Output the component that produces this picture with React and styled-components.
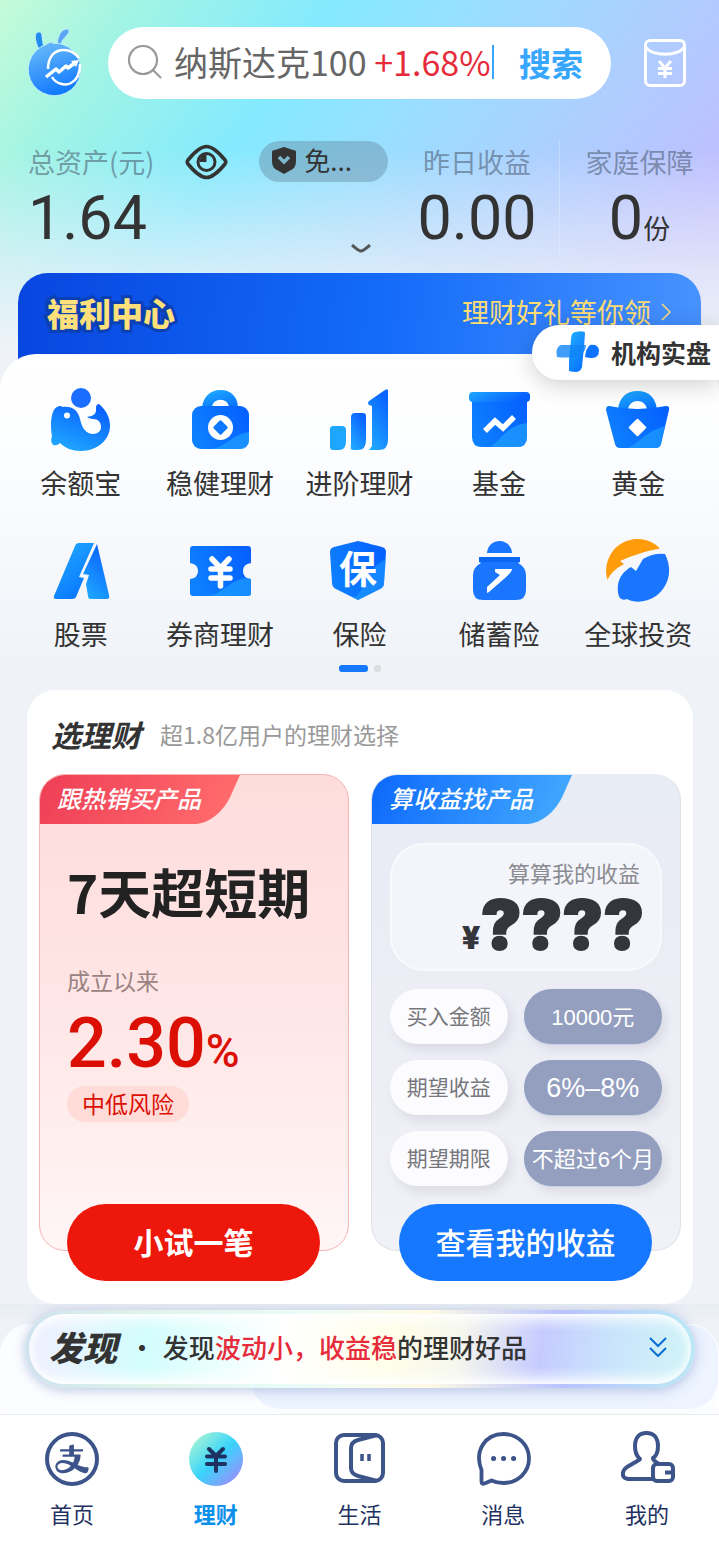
import React from "react";
import styled, { createGlobalStyle, css } from "styled-components";
import { AiOutlineAlipay } from "react-icons/ai";

const GlobalStyle = createGlobalStyle`
  * {
    box-sizing: border-box;
  }
  body {
    margin: 0;
    background: #eff3f8;
    color: #333;
    font-family: "Noto Sans CJK SC", sans-serif;
  }
  h1, h2, h3, p, dl, dt, dd, ul {
    margin: 0;
    padding: 0;
  }
  button {
    border: 0;
    padding: 0;
    background: none;
    color: inherit;
    font-family: inherit;
    cursor: pointer;
  }
  a {
    color: inherit;
    text-decoration: none;
  }
  svg {
    display: block;
    flex: none;
  }
`

const Top = styled.header`
  background:
    linear-gradient(to bottom, rgba(239, 243, 248, 0) 150px, rgba(236, 241, 248, 0.72) 270px, #eff3f8 350px),
    linear-gradient(125deg, #c5fbd8 0%, #a2f4e4 14%, #84eafe 34%, #9adeff 50%, #abd0ff 66%, #bfbfff 86%, #c8c0fa 100%);
`

const SearchRow = styled.div`
  display: flex;
  align-items: center;
  padding: 27px 33px 0 28px;
`

const SearchBox = styled.form`
  flex: 1;
  min-width: 0;
  height: 72px;
  margin: 0 33px 0 26px;
  padding: 0 28px 2px 20px;
  display: flex;
  align-items: center;
  border-radius: 36px;
  background: #fff;
`

const SearchField = styled.label`
  flex: 1;
  min-width: 0;
  position: relative;
  display: flex;
  align-items: center;
  gap: 12px;
`

const SearchInput = styled.input`
  position: absolute;
  inset: 0 0 0 46px;
  border: 0;
  outline: 0;
  background: transparent;
  font-size: 34px;
`

const SearchHint = styled.span`
  font-size: 34px;
  line-height: 48px;
  color: #666;
  white-space: nowrap;
  em {
    font-style: normal;
    color: #e62c3b;
  }
`

const SearchButton = styled.button`
  padding-left: 27px;
  display: flex;
  align-items: center;
  position: relative;
  font-size: 32px;
  line-height: 48px;
  font-weight: 700;
  color: #36a6ff;
  &::before {
    content: "";
    position: absolute;
    left: 0;
    width: 2px;
    height: 34px;
    background: #36a6ff;
  }
`

const Assets = styled.section`
  display: grid;
  grid-template-columns: 1fr 164px 160px;
  padding: 42px 0 19px 28px;
`

const AssetBlock = styled.div`
  position: relative;
  ${props => props.$divided && css`
    border-left: 1px solid rgba(255, 255, 255, 0.25);
  `}
`

const AssetLabel = styled.div`
  height: 41px;
  display: flex;
  align-items: center;
  justify-content: ${props => props.$center ? "center" : "flex-start"};
  gap: 31px;
  font-size: 27px;
  line-height: 38px;
  color: rgba(70, 85, 105, 0.55);
  white-space: nowrap;
`

const AssetValue = styled.div`
  height: 72px;
  display: flex;
  align-items: baseline;
  justify-content: ${props => props.$center ? "center" : "flex-start"};
  font-family: Roboto, "Noto Sans CJK SC", sans-serif;
  font-size: 61px;
  line-height: 72px;
  small {
    font-size: 27px;
  }
`

const Guard = styled.button`
  width: 129px;
  height: 41px;
  padding: 0 0 3px 12px;
  display: flex;
  align-items: center;
  gap: 7px;
  border-radius: 21px;
  background: rgba(102, 140, 165, 0.45);
  font-size: 26px;
  line-height: 38px;
  color: #333;
`

const Expand = styled.button`
  position: absolute;
  right: 24px;
  bottom: 0;
`

const BannerWrap = styled.div`
  position: relative;
  padding: 0 18px;
`

const Banner = styled.a`
  height: 101px;
  margin-bottom: -20px;
  padding: 0 30px 24px 29px;
  display: flex;
  align-items: center;
  justify-content: space-between;
  border-radius: 30px 30px 0 0;
  background: linear-gradient(95deg, #0846df, #136af9 52%, #4893ff);
  color: #ffdc73;
`

const BannerTitle = styled.strong`
  font-size: 32px;
  line-height: 48px;
  font-weight: 900;
  color: #ffe07a;
  -webkit-text-stroke: 6px #0b3fb4;
  paint-order: stroke fill;
`

const BannerLink = styled.span`
  display: flex;
  align-items: center;
  gap: 10px;
  font-size: 27px;
  line-height: 40px;
`

const FloatTag = styled.a`
  position: absolute;
  z-index: 2;
  top: 52px;
  right: 0;
  height: 55px;
  padding: 0 8px 2px 24px;
  display: flex;
  align-items: center;
  gap: 12px;
  border-radius: 28px 0 0 28px;
  background: #fff;
  box-shadow: 0 4px 24px rgba(0, 0, 0, 0.2);
  font-size: 25px;
  line-height: 36px;
  font-weight: 700;
`

const Sheet = styled.nav`
  position: relative;
  padding: 34px 11px 18px;
  border-radius: 36px 36px 0 0;
  background: linear-gradient(#fff, #fdfeff 25%, #f5f7fb 65%, #eff3f8 95%);
`

const Features = styled.ul`
  display: grid;
  grid-template-columns: repeat(5, 1fr);
  row-gap: 36px;
  list-style: none;
`

const Feature = styled.a`
  display: flex;
  flex-direction: column;
  align-items: center;
  gap: 11px;
  font-size: 27px;
  line-height: 40px;
  white-space: nowrap;
`

const Pager = styled.div`
  margin-top: 11px;
  display: flex;
  justify-content: center;
  gap: 6px;
`

const PagerDot = styled.span`
  width: ${props => props.$active ? "29px" : "7px"};
  height: 7px;
  border-radius: 3px;
  background: ${props => props.$active ? "#1677ff" : "#dcdcde"};
`

const Card = styled.section`
  margin: 0 26px 0 27px;
  padding: 0 12px 53px;
  border-radius: 28px;
  background: #fff;
`

const CardHead = styled.div`
  height: 84px;
  padding: 4px 0 0 12px;
  display: flex;
  align-items: center;
  gap: 19px;
`

const CardTitle = styled.h2`
  font-size: 30px;
  line-height: 44px;
  font-weight: 700;
  font-style: italic;
`

const CardNote = styled.p`
  font-size: 23px;
  line-height: 36px;
  color: #999;
`

const Panels = styled.div`
  display: grid;
  grid-template-columns: 1fr 1fr;
  gap: 22px;
`

const Panel = styled.article`
  display: flex;
  flex-direction: column;
  border-radius: 26px;
  border: 1px solid ${props => props.$hot ? "#f8b4b4" : "#dfe2e9"};
  border-top-color: ${props => props.$hot ? "#f8b4b4" : "#e8ecf5"};
  background: ${props => props.$hot
    ? "linear-gradient(#fedcdc, #ffe6e6 50%, #fff6f6)"
    : "linear-gradient(#e8ecf5, #ecedf5 45%, #f1f2f7)"};
`

const Tab = styled.h3`
  position: relative;
  z-index: 0;
  width: 200px;
  height: 49px;
  padding-left: 17px;
  overflow: hidden;
  border-top-left-radius: 25px;
  font-size: 24px;
  line-height: 46px;
  font-weight: 500;
  font-style: italic;
  color: #fff;
  &::before {
    content: "";
    position: absolute;
    z-index: -1;
    inset: 0 0 0 -40px;
    border-bottom-right-radius: 22px 28px;
    background: ${props => props.$hot
      ? "linear-gradient(90deg, #ee3d55 15%, #ff6a6c)"
      : "linear-gradient(90deg, #0b67fb 15%, #3fa6ff)"};
    transform: skewX(-24deg);
    transform-origin: top right;
  }
`

const Product = styled.div`
  padding: 37px 27px 0;
  display: flex;
  flex-direction: column;
  align-items: flex-start;
`

const ProductName = styled.strong`
  font-size: 53px;
  line-height: 60px;
  font-weight: 700;
  color: #222;
  white-space: nowrap;
`

const ProductLabel = styled.span`
  margin-top: 43px;
  font-size: 23px;
  line-height: 32px;
  color: #998282;
`

const Rate = styled.span`
  height: 72px;
  margin-top: 11px;
  font-family: Roboto, sans-serif;
  font-size: 70px;
  line-height: 72px;
  font-weight: 500;
  color: #dc0f05;
  small {
    font-size: 46px;
    line-height: 46px;
  }
`

const Risk = styled.span`
  margin-top: 7px;
  padding: 0 15px 2px;
  border-radius: 18px;
  background: #ffdcd8;
  font-size: 23px;
  line-height: 34px;
  color: #dc0f05;
`

const Cta = styled.button`
  height: 77px;
  margin: auto 28px -31px 27px;
  padding-bottom: 4px;
  border-radius: 39px;
  background: ${props => props.$hot ? "#ed180b" : "#1677ff"};
  font-size: 30px;
  line-height: 44px;
  font-weight: ${props => props.$hot ? 700 : 500};
  color: #fff;
`

const Guess = styled.div`
  height: 128px;
  margin: 19px 18px 0;
  padding: 11px 20px 0;
  border-radius: 34px;
  border: 2px solid #f8fafe;
  background: #f4f5fb;
  text-align: right;
`

const GuessLabel = styled.p`
  font-size: 22px;
  line-height: 32px;
  color: #8b8c92;
`

const GuessValue = styled.strong`
  display: block;
  margin-right: -4px;
  font-family: Inter, sans-serif;
  font-size: 68px;
  line-height: 72px;
  font-weight: 900;
  color: #35363c;
  -webkit-text-stroke: 2px #35363c;
  white-space: nowrap;
  small {
    font-size: 32px;
    line-height: 32px;
    -webkit-text-stroke: 0;
  }
`

const Terms = styled.dl`
  margin: 18px 18px;
  display: grid;
  grid-template-columns: 118fr 139fr;
  gap: 16px;
  text-align: center;
  white-space: nowrap;
`

const TermName = styled.dt`
  height: 55px;
  border-radius: 28px;
  background: #fcfcff;
  box-shadow: 4px 6px 10px rgba(80, 80, 110, 0.12);
  font-size: 21px;
  line-height: 53px;
  color: #77777c;
`

const TermValue = styled.dd`
  height: 55px;
  border-radius: 28px;
  background: #949fbf;
  box-shadow: 4px 6px 10px rgba(80, 80, 110, 0.12), 0 1px 0 #d5e4f5;
  font-family: "Liberation Sans", "Noto Sans CJK SC", sans-serif;
  font-size: ${props => props.$large ? "27px" : "22px"};
  line-height: 57px;
  color: #fff;
`

const Feed = styled.section`
  position: relative;
  height: 110px;
  padding: 6px 24px 0 25px;
  overflow: hidden;
  background: linear-gradient(#e8ecf3, #eff3f8 20px);
`

const FeedCard = styled.div`
  position: absolute;
  inset: ${props => props.$blue ? "20px 0 4px 250px" : "20px 0 -30px 0"};
  border-radius: 30px;
  border: 1px solid #fff;
  background: ${props => props.$blue ? "#edf3ff" : "#fcfdff"};
`

const Discover = styled.a`
  position: relative;
  height: 78px;
  padding: 0 24px 4px 20px;
  display: flex;
  align-items: center;
  border: 4px solid transparent;
  border-radius: 39px;
  background:
    linear-gradient(rgba(255, 255, 255, 0.6), rgba(255, 255, 255, 0) 25%, rgba(255, 255, 255, 0) 75%, rgba(255, 255, 255, 0.6)) padding-box,
    linear-gradient(97deg, #f2efff, #d2fdfd 18%, #fff 38%, #fefee9 55%, #f5f6ed 65%, #c5cbff 77%, #c9e3fc 87%, #d2f5f8) padding-box,
    linear-gradient(90deg, #cfe3ef, #dff4e9 18%, #eafcf9 40%, #fffbe5 60%, #b9c3ff 80%, #bce9f5) border-box;
  box-shadow: inset 0 0 8px 2px #fff, 0 2px 12px rgba(120, 145, 200, 0.5);
`

const DiscoverTitle = styled.strong`
  font-size: 34px;
  line-height: 48px;
  font-weight: 900;
  font-style: italic;
`

const DiscoverText = styled.span`
  flex: 1;
  font-size: 26px;
  line-height: 40px;
  font-weight: 500;
  white-space: nowrap;
  i {
    margin: 0 2px 0 12px;
    font-style: normal;
  }
  em {
    font-style: normal;
    color: #e62c3b;
  }
`

const TabBar = styled.nav`
  padding: 16px 0 14px;
  display: grid;
  grid-template-columns: repeat(5, 1fr);
  border-top: 1px solid #e9ebef;
  background: #fff;
`

const TabItem = styled.a`
  display: flex;
  flex-direction: column;
  align-items: center;
  gap: 8px;
  font-size: 22px;
  line-height: 36px;
  font-weight: ${props => props.$active ? 700 : 400};
  color: ${props => props.$active ? "#0c8fea" : "#1e3160"};
`

const HomeRing = styled.span`
  width: 54px;
  height: 54px;
  margin: 1px;
  display: flex;
  align-items: center;
  justify-content: center;
  border: 4px solid #3c5489;
  border-radius: 50%;
  font-size: 38px;
  color: #3c5489;
`

const Gradients = () => (
  <svg width="0" height="0" style={{ position: "absolute" }} aria-hidden="true">
    <defs>
      <linearGradient id="up" x1="0.1" y1="1" x2="0.6" y2="0">
        <stop offset="0" stopColor="#20acff" />
        <stop offset="1" stopColor="#0a63ff" />
      </linearGradient>
      <linearGradient id="down" x1="0" y1="0" x2="0.6" y2="1">
        <stop offset="0" stopColor="#20aeff" />
        <stop offset="1" stopColor="#0a76ff" />
      </linearGradient>
      <linearGradient id="side" x1="0" y1="0.6" x2="1" y2="0.2">
        <stop offset="0" stopColor="#0d80ff" />
        <stop offset="1" stopColor="#0560ff" />
      </linearGradient>
      <linearGradient id="light" x1="0" y1="0" x2="1" y2="0.3">
        <stop offset="0" stopColor="#1fa6ff" />
        <stop offset="1" stopColor="#0560ff" />
      </linearGradient>
      <linearGradient id="ball" x1="0.2" y1="0" x2="0.5" y2="1">
        <stop offset="0" stopColor="#6cbcf8" />
        <stop offset="1" stopColor="#0f78ff" />
      </linearGradient>
      <linearGradient id="coin" x1="0.1" y1="0.1" x2="0.9" y2="0.9">
        <stop offset="0" stopColor="#a6f3d6" />
        <stop offset="0.5" stopColor="#38d4fb" />
        <stop offset="0.68" stopColor="#5cbcfd" />
        <stop offset="1" stopColor="#9a8dfb" />
      </linearGradient>
    </defs>
  </svg>
)

const AntLogo = () => (
  <svg width="54" height="70" viewBox="0 0 54 70" fill="none">
    <path d="M10 4c3-.5 4 1 4 4l2 14-4 1C8 17 5 5 10 4z" fill="#1f8cee" stroke="#bfeefa" strokeWidth="1" />
    <path d="M39 1c3 0 2 3 1 5-3 4-6 5-7 11l-4-1C30 8 33 1 39 1z" fill="#5aa6f3" stroke="#bfeefa" strokeWidth="1" />
    <path d="M18 16.500a26.300 26.300 0 1 0 17 0q-5-1.500-10-1.300-2-2-4-.5z" fill="url(#ball)" stroke="#bfeefa" strokeWidth="1" />
    <path d="M20 41C20 29 26 22 36 22c7 0 12 4 15 8" stroke="#fff" strokeWidth="2.500" />
    <path d="M24 49c4 7 13 9 19 6 6-3 9-9 9-19" stroke="#fff" strokeWidth="2.500" />
    <path d="M18 49l10-8 3 3 7-6 2 2 8-6" stroke="#fff" strokeWidth="3.500" strokeLinejoin="round" />
    <path d="M43 33l8-1-3 7z" fill="#fff" />
  </svg>
)

const SearchIcon = () => (
  <svg width="34" height="34" viewBox="0 0 34 34" fill="none" stroke="#999" strokeWidth="2.200">
    <circle cx="15" cy="15" r="14" />
    <path d="M25 25l8 8" />
  </svg>
)

const PocketIcon = () => (
  <svg width="42" height="48" viewBox="0 0 42 48" fill="none" stroke="#fff">
    <rect x="1.500" y="1.500" width="39" height="45" rx="4.500" strokeWidth="3" />
    <path d="M2 8C6 17.500 36 17.500 40 8" strokeWidth="3" />
    <path d="M15 22l6 7 6-7M21 29v10M14 29.500h14M14 34.500h14" strokeWidth="3" />
  </svg>
)

const EyeIcon = () => (
  <svg width="43" height="36" viewBox="0 0 43 36" fill="none" stroke="#333">
    <path d="M3 16Q14 2.500 21.500 2.500T40 16q1.500 2 0 4Q29 33.500 21.500 33.500T3 20q-1.500-2 0-4z" strokeWidth="3.600" />
    <circle cx="21.500" cy="18" r="8.500" strokeWidth="3" />
    <path d="M21.500 10v8h-7A8 8 0 0 1 21.500 10z" fill="#333" stroke="none" />
  </svg>
)

const ShieldIcon = () => (
  <svg width="26" height="28" viewBox="0 0 26 28" fill="none">
    <path d="M13 1l9 3q3 0 3 2v9q0 7-5 9l-7 4-7-4q-5-2-5-9V6q0-2 3-2z" fill="#333" />
    <path d="M8 11l5 5 5-5" stroke="#7fb6cf" strokeWidth="3.500" />
  </svg>
)

const ExpandIcon = () => (
  <svg width="20" height="10" viewBox="0 0 20 10" fill="none" stroke="#555" strokeWidth="3">
    <path d="M1 1q7 6 9 6t9-6" />
  </svg>
)

const PlusMark = () => (
  <svg width="43" height="41" viewBox="0 0 43 41">
    <path d="M19 1q10-2 10 1l-1 14-2 20q-1 4-5 5-5 0-8-1V29l2-21q0-6 4-7z" fill="url(#down)" />
    <path d="M5 14h25q0 5-4 9-3 3-8 3-9 1-17 0Q-1 16 5 14z" fill="#1086f8" fillOpacity="0.8" />
    <path d="M34 14q8-1 9 5 0 8-7 8-4 0-7-1 1-9 5-12z" fill="#0b73ff" />
  </svg>
)

const FeatureIcon = ({ children }) => (
  <svg width="64" height="64" viewBox="0 0 64 64" fill="none">{children}</svg>
)

const features = [
  {
    label: "余额宝",
    icon: (
      <>
        <circle cx="32" cy="10" r="10" fill="#1b6dff" />
        <path d="M8 19q3-2 6 0c10-1 15 4 17 12 2 10 7 15 13 15 5 0 8-3 8-7 0-5-3-8-8-8-2 0-4-1-6-2 5-1 9-2 9-7 0-3 0-6 3-6C57 22 61 29 61 38c0 14-13 25-29 25-9 0-16-3-21-8q-3 3-7 2-3-3-1-9C1 36 2 22 8 19z" fill="url(#up)" />
        <circle cx="18" cy="27.500" r="3" fill="#fff" />
      </>
    ),
  },
  {
    label: "稳健理财",
    icon: (
      <>
        <path d="M14 20C15 9 22 2 32.500 2S50 9 50 20h-9c0-11-17-11-17 0z" fill="url(#down)" />
        <rect x="4" y="18" width="57" height="43" rx="9" fill="url(#side)" />
        <path d="M24 61C40 58 44 46 61 44v8q0 9-9 9z" fill="#22a5ff" fillOpacity="0.65" />
        <circle cx="32.500" cy="39.500" r="12.500" fill="#fff" />
        <rect x="27" y="34" width="11" height="11" rx="1.500" transform="rotate(45 32.500 39.500)" fill="#0d78ff" />
      </>
    ),
  },
  {
    label: "进阶理财",
    icon: (
      <>
        <path d="M6 38h9q4 0 4 4v11q0 9-7 9H6q-3 0-3-3V41q0-3 3-3z" fill="#1ea6ff" />
        <path d="M28 25h8q3 0 3 3v24q0 10-8 10h-6q-2-1-1-6V29q0-4 4-4z" fill="url(#up)" />
        <path d="M42 13L58 2q3-2 3 1v49q0 10-9 10H42l3-4V18l-3-1q-2-2 0-4z" fill="url(#up)" />
      </>
    ),
  },
  {
    label: "基金",
    icon: (
      <>
        <path d="M5 11h55v38q0 10-10 10H15Q5 59 5 49z" fill="url(#side)" />
        <path d="M23 59C34 53 38 38 60 35v14q0 10-10 10z" fill="#22a5ff" fillOpacity="0.65" />
        <rect x="2" y="4" width="61" height="10" rx="4" fill="url(#light)" />
        <path d="M18 43l10-10 8 7 11-11" stroke="#fff" strokeWidth="5.500" />
      </>
    ),
  },
  {
    label: "黄金",
    icon: (
      <>
        <path d="M12 22C13 10 20 3 31.500 3S50 10 51 22H41c-1-12-18-12-19 0z" fill="url(#down)" />
        <path d="M3 18q28 6 57 0 4 0 3 4l-8 34q-1 4-5 4H14q-4 0-5-4L0 22q0-4 3-4z" fill="url(#side)" />
        <path d="M22 60C34 55 38 44 59 38l-4 18q-1 4-5 4z" fill="#22a5ff" fillOpacity="0.6" />
        <rect x="25" y="33" width="13" height="13" rx="1" transform="rotate(45 31.500 39.500)" fill="#fff" />
      </>
    ),
  },
  {
    label: "股票",
    icon: (
      <>
        <path d="M30 4h15L30 38l5 1-8 19q-1 2-4 2H7q-3 0-2-3L26 7q1-3 4-3z" fill="url(#down)" />
        <path d="M48 5l12 51q1 4-2 4H42q-3 0-3-3l-2-12 3-9-6-1z" fill="url(#up)" />
      </>
    ),
  },
  {
    label: "券商理财",
    icon: (
      <>
        <path d="M5 7h55q3 0 3 3v14q-8 1-8 8t8 8v14q0 3-3 3H5q-3 0-3-3V40q8-1 8-8t-8-8V10q0-3 3-3z" fill="url(#side)" />
        <path d="M22 57C36 53 42 42 57 39l6 1v14q0 3-3 3z" fill="#22a5ff" fillOpacity="0.6" />
        <path d="M24 20l8.500 9 8.500-9M32.500 29v18M23 30h19M23 39h19" stroke="#fff" strokeWidth="5.500" strokeLinecap="round" />
      </>
    ),
  },
  {
    label: "保险",
    icon: (
      <>
        <path d="M31 2q1 0 24 6 4 1 4 5l-2 31q0 4-4 6L31 61 9 50q-4-2-4-6L3 13q0-4 4-5z" fill="url(#side)" />
        <path d="M27 59C40 50 38 30 59 20l-2 24q0 4-4 6L31 61z" fill="#22a5ff" fillOpacity="0.5" />
        <text x="31" y="44" textAnchor="middle" fontSize="38" fontWeight="700" fill="#fff">保</text>
      </>
    ),
  },
  {
    label: "储蓄险",
    icon: (
      <>
        <path d="M20 14C21-2 44-2 45 14z" fill="#1b76ff" />
        <path d="M12 18h41v5l-2 1q8 4 8 12v15q0 10-10 10H16Q6 61 6 51V36q0-8 8-12l-2-1z" fill="#1b76ff" />
        <path d="M12 18h41v5H12z" fill="#0b66f4" />
        <path d="M20 48l13-12-5-3v-3h17q0 3-7 9L22 53l-2 1z" fill="#fff" />
      </>
    ),
  },
  {
    label: "全球投资",
    icon: (
      <>
        <path d="M1.500 41A31.500 31.500 0 0 1 54 9.500Q34 13 14 22l4 3Q5 32 1.500 41z" fill="#ff9c0a" />
        <path d="M59 15c8 16 4 32-9 42-10 7-22 7-29 3q-4 2-7-1-3-4-2-13c1-8 6-14 13-18l5 4 7-12q10-6 22-5z" fill="#1b76ff" />
      </>
    ),
  },
]

const LifeIcon = () => (
  <svg width="56" height="56" viewBox="0 0 56 56" fill="none" stroke="#3c5489" strokeWidth="4">
    <rect x="5" y="4" width="47" height="46" rx="8" />
    <path d="M46 4L27 9q-7 2-7 8v20q0 6 7 8l19 5" />
    <path d="M31 23v7M38 23v7" strokeWidth="3.500" />
  </svg>
)

const MessageIcon = () => (
  <svg width="56" height="56" viewBox="0 0 56 56" fill="none" stroke="#3c5489" strokeWidth="3.800" strokeLinejoin="round">
    <path d="M6.500 39C-1 20 10 3 28.500 3 43 3 54 14 54 27.500S43 52 28.500 52q-7 0-12-2.500l-7 3q-3 1-3-2z" />
    <path d="M18.500 27.500h.1M28.500 27.500h.1M38.500 27.500h.1" strokeWidth="5" strokeLinecap="round" />
  </svg>
)

const MineIcon = () => (
  <svg width="56" height="56" viewBox="0 0 56 56" fill="none" stroke="#3c5489" strokeWidth="4" strokeLinejoin="round">
    <path d="M34 48H9q-6-1-5-6 0-3 4-6l12-7q2-1 0-2-4-4-4-12C16 7 20 2 27.500 2S39 7 39 15q0 9-5 12-1 2 6 6" />
    <rect x="34" y="33" width="20" height="17" rx="4" />
    <path d="M46 41.500h8" />
  </svg>
)

const CoinIcon = () => (
  <svg width="56" height="56" viewBox="0 0 56 56" fill="none">
    <circle cx="28" cy="28" r="27" fill="url(#coin)" />
    <path d="M21 18l7 7 7-7M28 25v15M19 25.500h18M19 33h18" stroke="#1e3160" strokeWidth="4" strokeLinecap="round" />
  </svg>
)

const tabs = [
  { label: "首页", icon: <HomeRing><AiOutlineAlipay /></HomeRing> },
  { label: "理财", icon: <CoinIcon />, active: true },
  { label: "生活", icon: <LifeIcon /> },
  { label: "消息", icon: <MessageIcon /> },
  { label: "我的", icon: <MineIcon /> },
]

const terms = [
  { name: "买入金额", value: "10000元" },
  { name: "期望收益", value: "6%–8%", large: true },
  { name: "期望期限", value: "不超过6个月" },
]

const App = () => {
  return (
    <>
      <GlobalStyle />
      <Gradients />
      <Top>
        <SearchRow>
          <AntLogo />
          <SearchBox onSubmit={e => e.preventDefault()}>
            <SearchField>
              <SearchIcon />
              <SearchHint>纳斯达克100 <em>+1.68%</em></SearchHint>
              <SearchInput type="text" />
            </SearchField>
            <SearchButton type="submit">搜索</SearchButton>
          </SearchBox>
          <button type="button"><PocketIcon /></button>
        </SearchRow>
        <Assets>
          <AssetBlock>
            <AssetLabel>
              总资产(元)
              <button type="button"><EyeIcon /></button>
              <Guard type="button"><ShieldIcon />免...</Guard>
            </AssetLabel>
            <AssetValue>1.64</AssetValue>
            <Expand type="button"><ExpandIcon /></Expand>
          </AssetBlock>
          <AssetBlock>
            <AssetLabel $center>昨日收益</AssetLabel>
            <AssetValue $center>0.00</AssetValue>
          </AssetBlock>
          <AssetBlock $divided>
            <AssetLabel $center>家庭保障</AssetLabel>
            <AssetValue $center>0<small>份</small></AssetValue>
          </AssetBlock>
        </Assets>
        <BannerWrap>
          <Banner href="#">
            <BannerTitle>福利中心</BannerTitle>
            <BannerLink>
              理财好礼等你领
              <svg width="10" height="18" viewBox="0 0 10 18" fill="none" stroke="#ffdc73" strokeWidth="1.500">
                <path d="M1 1l8 8-8 8" />
              </svg>
            </BannerLink>
          </Banner>
          <FloatTag href="#"><PlusMark />机构实盘</FloatTag>
        </BannerWrap>
      </Top>

      <Sheet>
        <Features>
          {features.map(({ label, icon }) => (
            <li key={label}>
              <Feature href="#">
                <FeatureIcon>{icon}</FeatureIcon>
                {label}
              </Feature>
            </li>
          ))}
        </Features>
        <Pager>
          <PagerDot $active />
          <PagerDot />
        </Pager>
      </Sheet>

      <Card>
        <CardHead>
          <CardTitle>选理财</CardTitle>
          <CardNote>超1.8亿用户的理财选择</CardNote>
        </CardHead>
        <Panels>
          <Panel $hot>
            <Tab $hot>跟热销买产品</Tab>
            <Product>
              <ProductName>7天超短期</ProductName>
              <ProductLabel>成立以来</ProductLabel>
              <Rate>2.30<small>%</small></Rate>
              <Risk>中低风险</Risk>
            </Product>
            <Cta type="button" $hot>小试一笔</Cta>
          </Panel>
          <Panel>
            <Tab>算收益找产品</Tab>
            <Guess>
              <GuessLabel>算算我的收益</GuessLabel>
              <GuessValue><small>¥</small>????</GuessValue>
            </Guess>
            <Terms>
              {terms.map(({ name, value, large }) => (
                <React.Fragment key={name}>
                  <TermName>{name}</TermName>
                  <TermValue $large={large}>{value}</TermValue>
                </React.Fragment>
              ))}
            </Terms>
            <Cta type="button">查看我的收益</Cta>
          </Panel>
        </Panels>
      </Card>

      <Feed>
        <FeedCard />
        <FeedCard $blue />
        <Discover href="#">
          <DiscoverTitle>发现</DiscoverTitle>
          <DiscoverText><i>·</i> 发现<em>波动小，收益稳</em>的理财好品</DiscoverText>
          <svg width="18" height="20" viewBox="0 0 18 20" fill="none" stroke="#0b6fd0" strokeWidth="2">
            <path d="M1 1l8 8 8-8M1 11l8 8 8-8" />
          </svg>
        </Discover>
      </Feed>

      <TabBar>
        {tabs.map(({ label, icon, active }) => (
          <TabItem key={label} href="#" $active={active}>
            {icon}
            {label}
          </TabItem>
        ))}
      </TabBar>
    </>
  );
}

export default App;
